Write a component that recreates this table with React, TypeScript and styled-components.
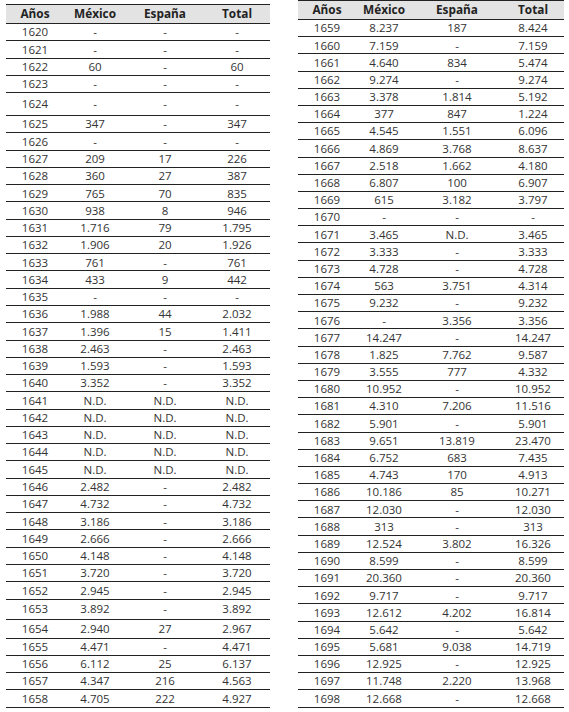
import styled, { createGlobalStyle } from 'styled-components'

const GlobalStyle = createGlobalStyle`
  html, body {
    margin: 0;
    padding: 0;
    background: #ffffff;
  }
  body {
    font-family: "Open Sans", "Liberation Sans", sans-serif;
  }
`

type Row = [string, string, string, string, number?]

const leftRows: Row[] = [
  ['1620', '-', '-', '-'],
  ['1621', '-', '-', '-'],
  ['1622', '60', '-', '60'],
  ['1623', '-', '-', '-'],
  ['1624', '-', '-', '-', 23],
  ['1625', '347', '-', '347'],
  ['1626', '-', '-', '-'],
  ['1627', '209', '17', '226'],
  ['1628', '360', '27', '387'],
  ['1629', '765', '70', '835'],
  ['1630', '938', '8', '946'],
  ['1631', '1.716', '79', '1.795'],
  ['1632', '1.906', '20', '1.926'],
  ['1633', '761', '-', '761'],
  ['1634', '433', '9', '442'],
  ['1635', '-', '-', '-'],
  ['1636', '1.988', '44', '2.032'],
  ['1637', '1.396', '15', '1.411'],
  ['1638', '2.463', '-', '2.463'],
  ['1639', '1.593', '-', '1.593'],
  ['1640', '3.352', '-', '3.352'],
  ['1641', 'N.D.', 'N.D.', 'N.D.'],
  ['1642', 'N.D.', 'N.D.', 'N.D.'],
  ['1643', 'N.D.', 'N.D.', 'N.D.'],
  ['1644', 'N.D.', 'N.D.', 'N.D.'],
  ['1645', 'N.D.', 'N.D.', 'N.D.'],
  ['1646', '2.482', '-', '2.482'],
  ['1647', '4.732', '-', '4.732'],
  ['1648', '3.186', '-', '3.186'],
  ['1649', '2.666', '-', '2.666'],
  ['1650', '4.148', '-', '4.148'],
  ['1651', '3.720', '-', '3.720'],
  ['1652', '2.945', '-', '2.945'],
  ['1653', '3.892', '-', '3.892', 20],
  ['1654', '2.940', '27', '2.967', 19],
  ['1655', '4.471', '-', '4.471'],
  ['1656', '6.112', '25', '6.137'],
  ['1657', '4.347', '216', '4.563'],
  ['1658', '4.705', '222', '4.927'],
]

const rightRows: Row[] = [
  ['1659', '8.237', '187', '8.424'],
  ['1660', '7.159', '-', '7.159'],
  ['1661', '4.640', '834', '5.474'],
  ['1662', '9.274', '-', '9.274'],
  ['1663', '3.378', '1.814', '5.192'],
  ['1664', '377', '847', '1.224'],
  ['1665', '4.545', '1.551', '6.096'],
  ['1666', '4.869', '3.768', '8.637'],
  ['1667', '2.518', '1.662', '4.180'],
  ['1668', '6.807', '100', '6.907'],
  ['1669', '615', '3.182', '3.797'],
  ['1670', '-', '-', '-'],
  ['1671', '3.465', 'N.D.', '3.465'],
  ['1672', '3.333', '-', '3.333'],
  ['1673', '4.728', '-', '4.728'],
  ['1674', '563', '3.751', '4.314'],
  ['1675', '9.232', '-', '9.232'],
  ['1676', '-', '3.356', '3.356'],
  ['1677', '14.247', '-', '14.247'],
  ['1678', '1.825', '7.762', '9.587'],
  ['1679', '3.555', '777', '4.332'],
  ['1680', '10.952', '-', '10.952'],
  ['1681', '4.310', '7.206', '11.516'],
  ['1682', '5.901', '-', '5.901'],
  ['1683', '9.651', '13.819', '23.470'],
  ['1684', '6.752', '683', '7.435'],
  ['1685', '4.743', '170', '4.913'],
  ['1686', '10.186', '85', '10.271'],
  ['1687', '12.030', '-', '12.030'],
  ['1688', '313', '-', '313'],
  ['1689', '12.524', '3.802', '16.326'],
  ['1690', '8.599', '-', '8.599'],
  ['1691', '20.360', '-', '20.360'],
  ['1692', '9.717', '-', '9.717'],
  ['1693', '12.612', '4.202', '16.814'],
  ['1694', '5.642', '-', '5.642'],
  ['1695', '5.681', '9.038', '14.719'],
  ['1696', '12.925', '-', '12.925'],
  ['1697', '11.748', '2.220', '13.968'],
  ['1698', '12.668', '-', '12.668'],
]

const Page = styled.div`
  display: flex;
  align-items: flex-start;
  width: 569px;
  height: 712px;
  overflow: hidden;
`

const Table = styled.div<{ $width: number; $top: number; $left: number }>`
  width: ${(p) => p.$width}px;
  margin-top: ${(p) => p.$top}px;
  margin-left: ${(p) => p.$left}px;
  border-top: 1px solid #222;
`

const Row = styled.div<{ $cols: string; $height: number }>`
  display: grid;
  grid-template-columns: ${(p) => p.$cols};
  height: ${(p) => p.$height}px;
  box-sizing: border-box;
  border-bottom: 1px solid #222;
  align-items: center;
`

const HeadRow = styled(Row)`
  background: #e3e3e3;
`

const HeadCell = styled.div`
  text-align: center;
  font-size: 11.8px;
  font-weight: 700;
  color: #222;
  line-height: 1;
`

const Cell = styled.div`
  text-align: center;
  font-size: 11.5px;
  color: #333;
  line-height: 1;
`

type TableProps = {
  rows: Row[]
  cols: string
  width: number
  top: number
  left: number
  headHeight: number
  rowHeight: number
}

function YearTable({ rows, cols, width, top, left, headHeight, rowHeight }: TableProps) {
  return (
    <Table $width={width} $top={top} $left={left}>
      <HeadRow $cols={cols} $height={headHeight}>
        <HeadCell>Años</HeadCell>
        <HeadCell>México</HeadCell>
        <HeadCell>España</HeadCell>
        <HeadCell>Total</HeadCell>
      </HeadRow>
      {rows.map(([year, mx, es, total, h]) => (
        <Row key={year} $cols={cols} $height={h ?? rowHeight}>
          <Cell>{year}</Cell>
          <Cell>{mx}</Cell>
          <Cell>{es}</Cell>
          <Cell>{total}</Cell>
        </Row>
      ))}
    </Table>
  )
}

export default function App() {
  return (
    <>
      <GlobalStyle />
      <Page>
        <YearTable
          rows={leftRows}
          cols="58px 62px 78px 66px"
          width={264}
          top={4}
          left={6}
          headHeight={19}
          rowHeight={17.28}
        />
        <YearTable
          rows={rightRows}
          cols="58px 56px 90px 62px"
          width={266}
          top={0}
          left={28}
          headHeight={19}
          rowHeight={17.2}
        />
      </Page>
    </>
  )
}
